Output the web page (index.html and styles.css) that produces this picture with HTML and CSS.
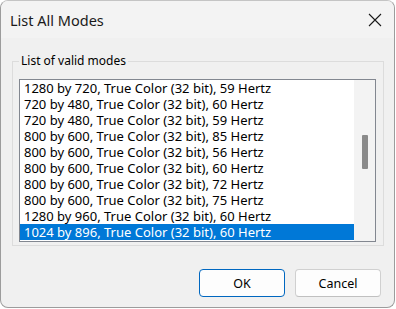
FILE: index.html
```html
<!DOCTYPE html>
<html lang="en">
<head>
    <meta charset="UTF-8">
    <title>List All Modes</title>
    <link rel="stylesheet" href="styles.css">
</head>
<body>

<!-- Boîte de dialogue -->
<div class="window">
    <div class="titlebar">
        <span class="title">List All Modes</span>
        <button class="close" aria-label="Close">
            <svg width="14" height="14" viewBox="0 0 14 14">
                <path d="M1 1 L13 13 M13 1 L1 13" stroke="#1a1a1a" stroke-width="1.1" fill="none"/>
            </svg>
        </button>
    </div>

    <div class="group">
        <span class="legend">List of valid modes</span>
        <div class="listbox">
            <div class="rows">
                <div class="row">1280 by 720, True Color (32 bit), 59 Hertz</div>
                <div class="row">720 by 480, True Color (32 bit), 60 Hertz</div>
                <div class="row">720 by 480, True Color (32 bit), 59 Hertz</div>
                <div class="row">800 by 600, True Color (32 bit), 85 Hertz</div>
                <div class="row">800 by 600, True Color (32 bit), 56 Hertz</div>
                <div class="row">800 by 600, True Color (32 bit), 60 Hertz</div>
                <div class="row">800 by 600, True Color (32 bit), 72 Hertz</div>
                <div class="row">800 by 600, True Color (32 bit), 75 Hertz</div>
                <div class="row">1280 by 960, True Color (32 bit), 60 Hertz</div>
                <div class="row selected">1024 by 896, True Color (32 bit), 60 Hertz</div>
            </div>
            <div class="scrollbar">
                <div class="thumb"></div>
            </div>
        </div>
    </div>

    <div class="buttons">
        <button class="btn default">OK</button>
        <button class="btn">Cancel</button>
    </div>
</div>

</body>
</html>
```

FILE: styles.css
```css
body {
    margin: 0;
    background-color: #ffffff;
    font-family: "Segoe UI", "Noto Sans", sans-serif;
}

/* Fenêtre */
.window {
    width: 395px;
    height: 308px;
    box-sizing: border-box;
    border: 1px solid #9c9c9c;
    border-top-color: #c4c4c4;
    border-radius: 8px;
    background-color: #f0f0f0;
    overflow: hidden;
}

.titlebar {
    height: 37px;
    display: flex;
    align-items: center;
    justify-content: space-between;
    padding: 0 12px 0 9px;
    background-color: #f3f3f3;
}

.title {
    font-size: 14.5px;
    color: #1a1a1a;
}

.close {
    width: 14px;
    height: 14px;
    padding: 0;
    border: none;
    background: none;
    display: flex;
}

/* Cadre de groupe */
.group {
    position: relative;
    height: 185px;
    box-sizing: border-box;
    margin: 23px 10px 0 11px;
    padding: 17px 7px 3px 6px;
    border: 1px solid #dcdcdc;
}

.legend {
    position: absolute;
    top: -10px;
    left: 6px;
    padding: 0 2px;
    background-color: #f0f0f0;
    font-size: 12px;
    line-height: 18px;
    color: #000;
}

/* Liste */
.listbox {
    height: 163px;
    box-sizing: border-box;
    border: 1px solid #828790;
    background-color: #ffffff;
    display: flex;
}

.rows {
    flex: 1;
}

.row {
    height: 16px;
    line-height: 16px;
    padding-left: 4px;
    font-size: 13px;
    color: #000;
    white-space: nowrap;
}

.row.selected {
    background-color: #0078d7;
    color: #ffffff;
}

.scrollbar {
    width: 21px;
    background-color: #f3f3f3;
}

.thumb {
    width: 6px;
    height: 34px;
    margin: 55px auto 0;
    background-color: #8a8a8a;
    border-radius: 1px;
}

/* Boutons */
.buttons {
    display: flex;
    justify-content: flex-end;
    gap: 10px;
    margin-top: 23px;
    padding-right: 13px;
}

.btn {
    width: 86px;
    height: 28px;
    box-sizing: border-box;
    border: 1px solid #d0d0d0;
    border-bottom-color: #c0c0c0;
    border-radius: 4px;
    background-color: #fdfdfd;
    font-family: "Segoe UI", "Noto Sans", sans-serif;
    font-size: 12.5px;
    color: #000;
    padding: 0;
}

.btn.default {
    border: 1px solid #0067c0;
}
```
